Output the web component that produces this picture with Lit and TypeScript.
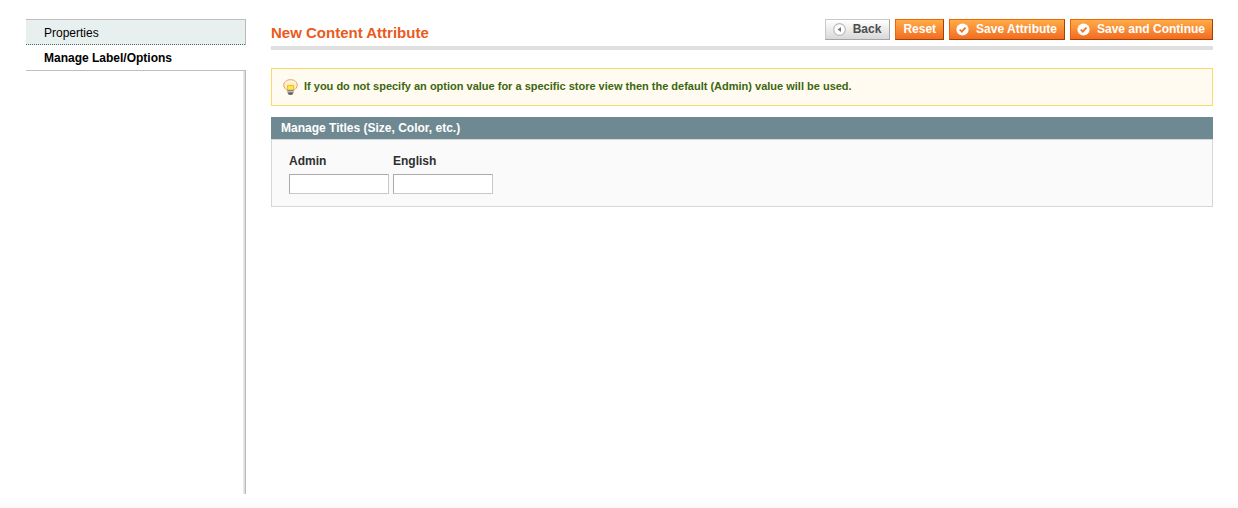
import { LitElement, html, css } from "lit";
import { customElement, state } from "lit/decorators.js";

const backIcon = html`<svg class="icon" viewBox="0 0 13 13" aria-hidden="true">
  <circle cx="6.5" cy="6.5" r="5.8" fill="#fff" stroke="#bcbcbc" stroke-width="1.2" />
  <path d="M8 4v5L4.6 6.5z" fill="#777" />
</svg>`;

const checkIcon = html`<svg class="icon" viewBox="0 0 13 13" aria-hidden="true">
  <circle cx="6.5" cy="6.5" r="6.1" fill="#fff" />
  <path d="M3.7 6.5l2.1 2.2 3.7-4.1" fill="none" stroke="#ee7326" stroke-width="1.8" />
</svg>`;

const bulbIcon = html`<svg class="bulb" viewBox="0 0 15 16" aria-hidden="true">
  <defs>
    <radialGradient id="glow" cx="50%" cy="75%" r="75%">
      <stop offset="0" stop-color="#ffdf45" />
      <stop offset=".5" stop-color="#fff0b4" />
      <stop offset="1" stop-color="#fff8ea" />
    </radialGradient>
  </defs>
  <path d="M7.500.7C3.600.7.800 3 .8 6c0 2.600 1.700 4.200 3.500 5.300h6.400C12.500 10.200 14.200 8.600 14.200 6c0-3-2.800-5.300-6.700-5.300z" fill="url(#glow)" stroke="#df9f78" />
  <path d="M4.500 6.500h6v4.600h-6z" fill="#ffe253" stroke="#e3b240" stroke-width=".8" />
  <path d="M4.500 11h6v3l-1.200 1.500H5.700L4.500 14z" fill="#85857f" />
  <path d="M5 12.500h5" stroke="#d0d0ca" stroke-width=".8" />
  <path d="M5.600 15h3.800" stroke="#333" />
</svg>`;

@customElement("app-root")
export class AppRoot extends LitElement {
  static styles = css`
    :host {
      display: block;
      font: 12px/18px "Liberation Sans", Arial, Helvetica, sans-serif;
      color: #2f2f2f;
    }
    * {
      box-sizing: border-box;
    }
    .page {
      display: grid;
      grid-template-columns: 220px minmax(0, 1fr);
      column-gap: 25px;
      min-height: 100vh;
      padding: 19px 25px 14px 26px;
      background: linear-gradient(to top, #fafafa, #fff 10px);
    }
    .side {
      border-right: 1px solid #bababa;
      background: linear-gradient(to left, #dcdcdc 1px, #ebebeb 1px, #ebebeb 2px, #fff 2px);
    }
    .tab {
      display: block;
      padding: 4px 18px 2px;
      color: #000;
      text-decoration: none;
      border-bottom: 1px dotted #4e6b69;
      background: #e7efef;
    }
    .tab:first-child {
      border-top: 1px solid #bebebe;
    }
    .tab.active {
      margin-right: -1px;
      padding-bottom: 3px;
      border-bottom: 1px solid #bebebe;
      background: #fff;
      font-weight: bold;
    }
    .head {
      display: flex;
      justify-content: space-between;
      align-items: flex-start;
      padding-bottom: 3px;
      border-bottom: 4px solid #dfdfdf;
      margin-bottom: 18px;
    }
    h1 {
      margin: 0;
      padding-top: 4px;
      font-size: 15px;
      line-height: 20px;
      color: #ea5a1c;
    }
    .actions {
      display: flex;
      gap: 5px;
    }
    .btn {
      display: flex;
      align-items: center;
      height: 21px;
      padding: 0 7px 1px;
      border: 1px solid;
      border-color: #ed6502 #a04300 #a04300 #ed6502;
      border-radius: 0;
      background: linear-gradient(#ffac47, #f26c22);
      color: #fff;
      font: bold 12px/18px "Liberation Sans", Arial, Helvetica, sans-serif;
      cursor: pointer;
    }
    .btn.save {
      padding-left: 6px;
    }
    .btn.back {
      padding-right: 8px;
      border-color: #c8c8c8 #a5a5a5 #a5a5a5 #c8c8c8;
      background: linear-gradient(#fff, #d8d8d8);
      color: #4c4c4c;
    }
    .icon {
      width: 13px;
      height: 13px;
      margin-right: 7px;
    }
    .notice {
      display: flex;
      align-items: center;
      gap: 6px;
      padding: 9px 11px 10px;
      margin-bottom: 11px;
      border: 1px solid #ffd967;
      background: #fffbf0;
      color: #3d6611;
      font-size: 11px;
      font-weight: bold;
      line-height: 17px;
    }
    .bulb {
      flex: none;
      width: 15px;
      height: 16px;
    }
    h2 {
      margin: 0;
      padding: 2px 10px;
      background: #6f8992;
      color: #fff;
      font-size: 12px;
      line-height: 18px;
    }
    .box {
      display: flex;
      gap: 4px;
      padding: 12px 17px;
      border: 1px solid #d6d6d6;
      background: #fafafa;
    }
    .field {
      width: 100px;
    }
    .field label {
      display: block;
      margin-bottom: 4px;
      font-weight: bold;
    }
    .field input {
      display: block;
      width: 100%;
      height: 20px;
      padding: 2px;
      border: 1px solid;
      border-color: #aaa #c8c8c8 #c8c8c8 #aaa;
      border-radius: 0;
      background: #fff;
      font: inherit;
    }
  `;

  @state() private tab = 1;

  private tabs = ["Properties", "Manage Label/Options"];
  private stores = ["Admin", "English"];

  private pick(e: Event, i: number) {
    e.preventDefault();
    this.tab = i;
  }

  render() {
    return html`<div class="page">
      <nav class="side">
        ${this.tabs.map(
          (t, i) => html`<a href="#" class="tab ${i === this.tab ? "active" : ""}" @click=${(e: Event) => this.pick(e, i)}>${t}</a>`
        )}
      </nav>
      <main>
        <div class="head">
          <h1>New Content Attribute</h1>
          <div class="actions">
            <button type="button" class="btn back">${backIcon}Back</button>
            <button type="button" class="btn">Reset</button>
            <button type="button" class="btn save">${checkIcon}Save Attribute</button>
            <button type="button" class="btn save">${checkIcon}Save and Continue</button>
          </div>
        </div>
        <div class="notice">
          ${bulbIcon}
          <span>If you do not specify an option value for a specific store view then the default (Admin) value will be used.</span>
        </div>
        <section>
          <h2>Manage Titles (Size, Color, etc.)</h2>
          <div class="box">
            ${this.stores.map(
              (s) => html`<div class="field">
                <label for=${s}>${s}</label>
                <input id=${s} type="text" />
              </div>`
            )}
          </div>
        </section>
      </main>
    </div>`;
  }
}
